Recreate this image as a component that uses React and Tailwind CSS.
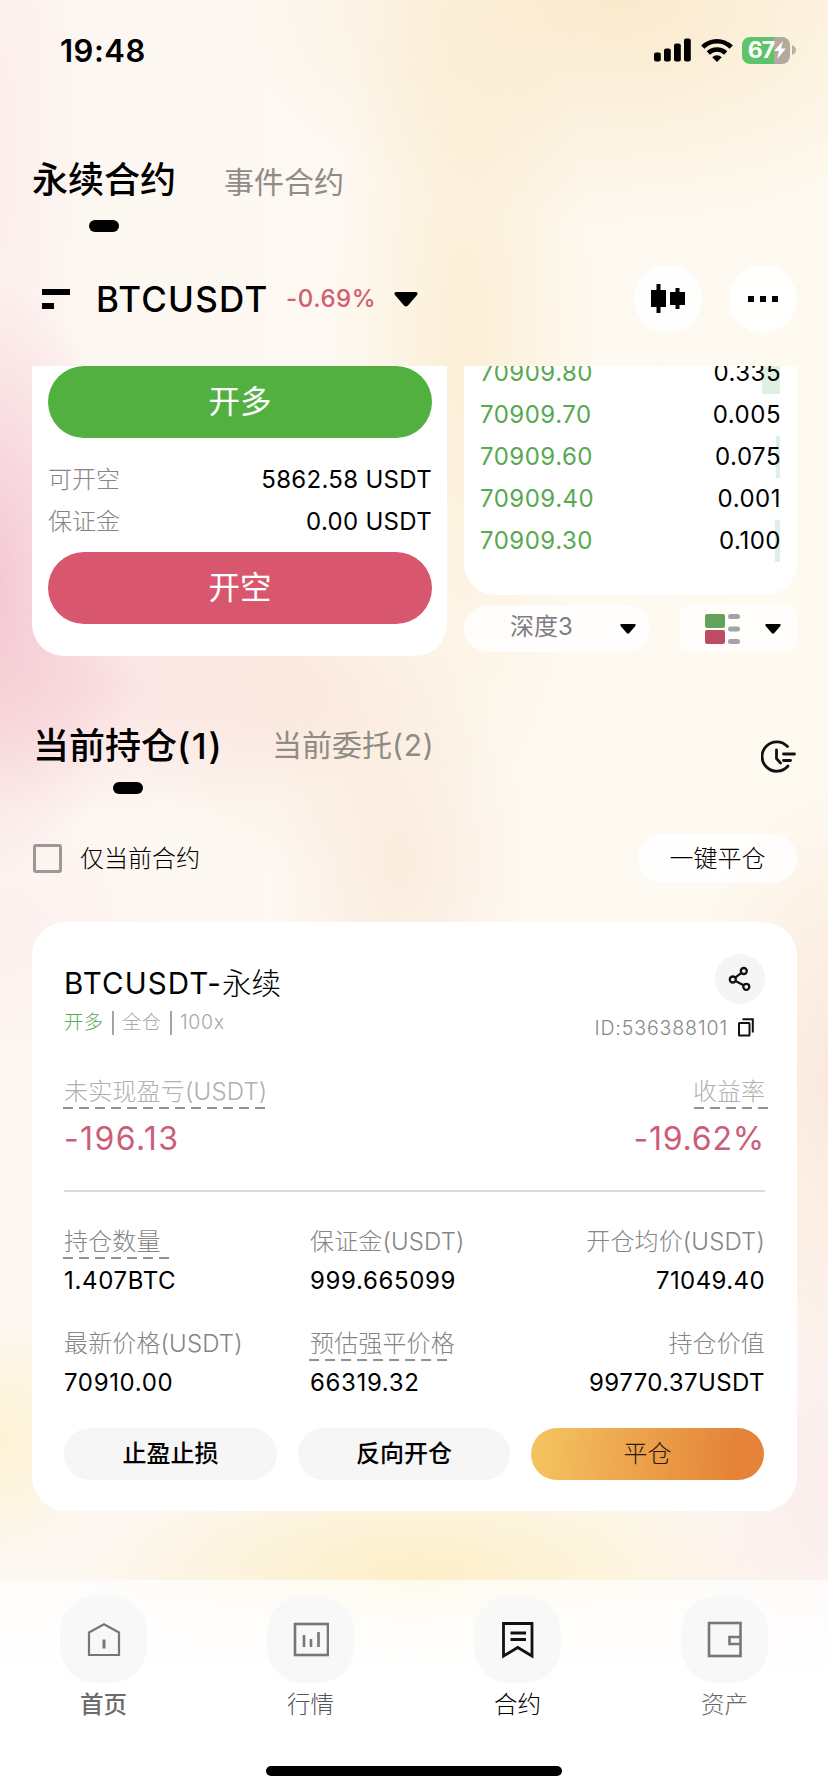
import React from "react";

const Caret = ({ className }) => (
  <svg viewBox="0 0 24 15" className={className} preserveAspectRatio="none">
    <path d="M2 0H22Q24.500 0.500 23 3L14 13.500Q12 15.500 10 13.500L1 3Q-0.500 0.500 2 0Z" fill="#000" />
  </svg>
);

const Dash = ({ className }) => (
  <div
    className={`absolute h-[2px] bg-[repeating-linear-gradient(90deg,#929292_0px,#929292_10px,transparent_10px,transparent_16px)] ${className}`}
  />
);

const StatusBar = () => (
  <div className="flex h-[100px] items-center justify-between pl-[60px] pr-[32px]">
    <span className="w-[90px] whitespace-nowrap text-[31px] font-semibold leading-none tracking-[0.500px]">19:48</span>
    <div className="flex items-center">
      <svg width="37" height="24" viewBox="0 0 37 24">
        <rect x="0" y="14.500" width="6.800" height="9" rx="2" />
        <rect x="10" y="10.500" width="6.800" height="13" rx="2" />
        <rect x="20" y="5.500" width="6.800" height="18" rx="2" />
        <rect x="30" y="0.500" width="6.800" height="23" rx="2" />
      </svg>
      <svg width="32" height="24" viewBox="0 0 32 24" className="ml-[10px]" fill="none" stroke="#000" strokeWidth="4.600">
        <path d="M1.800 9.200A20 20 0 0 1 30.200 9.200" />
        <path d="M7.300 15A12.500 12.500 0 0 1 24.700 15" />
        <path d="M11.200 19.200A7 7 0 0 1 20.800 19.200L16 24Z" fill="#000" stroke="none" />
      </svg>
      <div className="ml-[9px] flex h-[27px] w-[48px] items-center justify-center rounded-[8px] bg-[linear-gradient(90deg,#5fc36b_0_67%,#b3aa9d_67%)] pl-[2px] text-white">
        <span className="text-[23px] font-bold leading-none tracking-[-1px]">67</span>
        <svg width="12" height="18" viewBox="0 0 12 18">
          <path d="M9 0L0 10H5L3 18L12 7.500H7Z" fill="#fff" />
        </svg>
      </div>
      <svg width="4" height="10" viewBox="0 0 4 10" className="ml-[2px]">
        <path d="M0 0Q4 1.500 4 5T0 10Z" fill="#b9b2a4" />
      </svg>
    </div>
  </div>
);

const TopTabs = () => (
  <div className="h-[146px] pl-[32px]">
    <div className="flex h-[108px] items-end">
      <span className="h-[54px] w-[143px] whitespace-nowrap text-[36px] font-medium leading-[53px]">永续合约</span>
      <span className="ml-[49px] h-[50px] text-[30px] leading-[49px] text-[#8f8b87]">事件合约</span>
    </div>
    <div className="ml-[57px] mt-[12px] h-[12px] w-[30px] rounded-full bg-black" />
  </div>
);

const PairHeader = () => (
  <div className="flex h-[106px] items-center pl-[42px] pr-[31px]">
    <svg width="28" height="20" viewBox="0 0 28 20">
      <rect x="0" y="0" width="28" height="6" />
      <rect x="0" y="14" width="12" height="6" />
    </svg>
    <span className="ml-[26px] w-[174px] whitespace-nowrap text-[35px] font-medium leading-none tracking-[1.200px]">BTCUSDT</span>
    <span className="ml-[16px] w-[93px] whitespace-nowrap text-[24px] font-medium leading-none tracking-[0.600px] text-[#d0606f]">-0.69%</span>
    <Caret className="ml-[15px] h-[15px] w-[24px]" />
    <div className="ml-auto flex gap-[27px]">
      <div className="flex h-[68px] w-[68px] items-center justify-center rounded-full bg-white/90">
        <svg width="34" height="30" viewBox="0 0 34 30">
          <rect x="0" y="6" width="15" height="17" />
          <rect x="5.500" y="0" width="4" height="29" />
          <rect x="19" y="8" width="15" height="13" />
          <rect x="24.500" y="4" width="4" height="21" />
        </svg>
      </div>
      <div className="flex h-[68px] w-[68px] items-center justify-center gap-[6px] rounded-full bg-white/90">
        <i className="h-[6px] w-[6px] bg-black" />
        <i className="h-[6px] w-[6px] bg-black" />
        <i className="h-[6px] w-[6px] bg-black" />
      </div>
    </div>
  </div>
);

const InfoRow = ({ label, value }) => (
  <div className="flex h-[42px] items-center justify-between">
    <span className="text-[24px] font-light text-[#858585]">{label}</span>
    <span className="-mr-px text-[24px] tracking-[0.300px]">{value}</span>
  </div>
);

const orders = [
  ["70909.80", "0.335", "w-[18px]"],
  ["70909.70", "0.005", "w-0"],
  ["70909.60", "0.075", "w-[4px]"],
  ["70909.40", "0.001", "w-0"],
  ["70909.30", "0.100", "w-[5px]"],
];

const TradePanel = () => (
  <div className="flex h-[304px] overflow-hidden pl-[32px] pr-[31px] pt-[14px]">
    <div className="h-[290px] w-[415px] rounded-b-[32px] bg-white px-[16px]">
      <button className="block h-[72px] w-[384px] rounded-full bg-[#52b040] text-[31.500px] leading-[72px] text-white">开多</button>
      <div className="h-[114px] pt-[21px]">
        <InfoRow label="可开空" value="5862.58 USDT" />
        <InfoRow label="保证金" value="0.00 USDT" />
      </div>
      <button className="block h-[72px] w-[384px] rounded-full bg-[#d9576e] text-[31.500px] leading-[72px] text-white">开空</button>
    </div>
    <div className="ml-[17px] w-[333px]">
      <div className="flex h-[229px] flex-col justify-end overflow-hidden rounded-b-[32px] bg-white pb-[33px] pl-[16px] pr-[17px]">
        {orders.map(([price, amount, bar]) => (
          <div key={price} className="relative flex h-[42px] shrink-0 items-center justify-between text-[24px] tracking-[0.500px]">
            <div className={`absolute right-0 top-0 h-full bg-[#dff0e2] ${bar}`} />
            <span className="text-[#57a94f]">{price}</span>
            <span className="relative -mr-px">{amount}</span>
          </div>
        ))}
      </div>
      <div className="mt-[10px] flex h-[47px] justify-between">
        <div className="flex w-[186px] items-center rounded-full bg-white/80 pl-[46px]">
          <span className="w-[64px] whitespace-nowrap text-[24px] leading-[44px] text-[#7d7d82] -mt-[3px]">深度3</span>
          <Caret className="ml-[46px] h-[10px] w-[16px]" />
        </div>
        <div className="flex w-[117px] items-center rounded-[10px] bg-white/70 pl-[25px]">
          <svg width="36" height="30" viewBox="0 0 36 30">
            <rect width="20" height="14" rx="2" fill="#63a25b" />
            <rect y="16" width="20" height="14" rx="2" fill="#bd4d62" />
            <rect x="23" y="0" width="12" height="5" rx="2.500" fill="#a3a3a8" />
            <rect x="23" y="12.500" width="12" height="5" rx="2.500" fill="#a3a3a8" />
            <rect x="23" y="25" width="12" height="5" rx="2.500" fill="#a3a3a8" />
          </svg>
          <Caret className="ml-[24px] h-[10px] w-[16px]" />
        </div>
      </div>
    </div>
  </div>
);

const PositionTabs = () => (
  <div className="h-[266px] pl-[33px] pr-[31px]">
    <div className="flex h-[152px] pt-[62px]">
      <div className="w-[190px]">
        <div className="whitespace-nowrap text-[36px] font-medium leading-[56px]">
          当前持仓<span className="tracking-[1.500px]">(1)</span>
        </div>
        <div className="ml-[80px] mt-[8px] h-[12px] w-[30px] rounded-full bg-black" />
      </div>
      <span className="ml-[49px] text-[30px] leading-[55px] text-[#8f8b85]">
        当前委托<span className="tracking-[0.800px]">(2)</span>
      </span>
      <svg width="36" height="34" viewBox="0 0 36 34" className="ml-auto mt-[22px]" fill="none" stroke="#111" strokeWidth="2.800" strokeLinecap="round" strokeLinejoin="round">
        <path d="M26.500 6.500A14.700 14.700 0 1 0 27 26" />
        <path d="M15.500 10V18.500L19.500 23" />
        <path d="M22.500 14H33.500" />
        <path d="M22.500 20.500H29.500" />
      </svg>
    </div>
    <div className="mt-[12px] flex h-[77px] items-center">
      <div className="h-[29px] w-[29px] rounded-[3px] border-[3px] border-[#9c9898]" />
      <span className="ml-[18px] text-[24px] font-light">仅当前合约</span>
      <button className="ml-auto h-[49px] w-[159px] rounded-full bg-white/90 text-[24px] font-light leading-[49px]">一键平仓</button>
    </div>
  </div>
);

const Metric = ({ label, value, dash, right }) => (
  <div className={`h-[102px] whitespace-nowrap ${right ? "text-right" : ""}`}>
    <div className="relative h-[40px] text-[24px] font-light leading-[44px] tracking-[0.150px] text-[#858585]">
      {label}
      {dash && <Dash className={`-left-px top-[37px] ${dash}`} />}
    </div>
    <div className={`pt-px text-[24px] leading-[40px] ${right ? "tracking-[0.400px]" : "tracking-[0.650px]"}`}>{value}</div>
  </div>
);

const PositionCard = () => (
  <section className="mx-[32px] mr-[31px] h-[589px] rounded-[34px] bg-white px-[32px]">
    <div className="flex h-[148px] justify-between">
      <div className="pt-[38px]">
        <div className="whitespace-nowrap text-[29.500px] font-light leading-[46px]">
          <span className="font-normal tracking-[1.100px]">BTCUSDT-</span>永续
        </div>
        <div className="mt-[5px] flex h-[24px] items-center whitespace-nowrap text-[19.500px] font-light leading-none text-[#a8a8a8]">
          <span className="w-[39px] text-[#57a94f]">开多</span>
          <i className="ml-[9px] h-[24px] w-[2px] bg-[#a3a3a3]" />
          <span className="ml-[8px] w-[40px]">全仓</span>
          <i className="ml-[8px] h-[24px] w-[2px] bg-[#a3a3a3]" />
          <span className="ml-[8px] tracking-[0.700px]">100x</span>
        </div>
      </div>
      <div className="flex flex-col items-end pt-[32px]">
        <div className="flex h-[50px] w-[50px] items-center justify-center rounded-full bg-[#f5f5f5]">
          <svg width="24" height="26" viewBox="0 0 24 26" fill="none" stroke="#111" strokeWidth="2.300">
            <circle cx="15.800" cy="5" r="3" />
            <circle cx="4.800" cy="13.500" r="3" />
            <circle cx="18.300" cy="20.800" r="3" />
            <path d="M7.200 11.600L13.400 6.900M7.500 15L15.600 19.300" />
          </svg>
        </div>
        <div className="mr-[11px] mt-[15px] flex h-[20px] items-center">
          <span className="text-[19.500px] font-light leading-none tracking-[0.900px] text-[#888]">ID:536388101</span>
          <svg width="16" height="19" viewBox="0 0 16 19" className="ml-[10px] -mt-[3px]" fill="none" stroke="#111" strokeWidth="2">
            <rect x="1" y="5" width="10.500" height="12.500" rx="0.500" />
            <path d="M4.500 1.200H14.800V14.500" />
          </svg>
        </div>
      </div>
    </div>
    <div className="flex h-[122px] justify-between border-b-2 border-[#dadada]">
      <div className="relative whitespace-nowrap">
        <div className="h-[40px] text-[24px] font-light leading-[44px] tracking-[0.200px] text-[#b0b0b0]">未实现盈亏(USDT)</div>
        <Dash className="-left-px top-[37px] w-[203px]" />
        <div className="mt-[7px] text-[32px] leading-[44px] tracking-[1.400px] text-[#cc5c78]">-196.13</div>
      </div>
      <div className="whitespace-nowrap text-right">
        <div className="relative ml-auto h-[40px] w-[72px] text-[24px] font-light leading-[44px] text-[#b0b0b0]">
          收益率
          <Dash className="left-px top-[37px] w-[74px]" />
        </div>
        <div className="mt-[7px] text-[32px] leading-[44px] tracking-[0.800px] text-[#cc5c78]">-19.62%</div>
      </div>
    </div>
    <div className="grid grid-cols-[246px_210px_1fr] pt-[28px]">
      <Metric label="持仓数量" value="1.407BTC" dash="w-[107px]" />
      <Metric label="保证金(USDT)" value="999.665099" />
      <Metric label="开仓均价(USDT)" value="71049.40" right />
      <Metric label="最新价格(USDT)" value="70910.00" />
      <Metric label="预估强平价格" value="66319.32" dash="w-[139px]" />
      <Metric label="持仓价值" value="99770.37USDT" right />
    </div>
    <div className="mt-[4px] flex h-[52px] gap-[21px] text-[24px] leading-[52px]">
      <button className="w-[213px] rounded-full bg-[#f6f6f6] font-medium">止盈止损</button>
      <button className="w-[212px] rounded-full bg-[#f6f6f6] font-medium">反向开仓</button>
      <button className="w-[233px] rounded-full bg-[linear-gradient(100deg,#f5c662,#e58439_85%)] font-light text-[#2a1808]">平仓</button>
    </div>
  </section>
);

const NavItem = ({ label, className, children }) => (
  <div className="flex w-[207px] flex-col items-center">
    <div className="flex h-[87px] w-[87px] items-center justify-center rounded-[36px] bg-[#f8f8f8]">{children}</div>
    <span className={`mt-[4px] text-[23.500px] leading-[36px] ${className}`}>{label}</span>
  </div>
);

const BottomNav = () => (
  <nav className="h-[212px] bg-[linear-gradient(180deg,rgba(255,255,255,0.7),#fff_50%)] pt-[16px]">
    <div className="flex h-[170px]">
      <NavItem label="首页" className="font-medium text-[#6b6b6b]">
        <svg width="34" height="36" viewBox="0 0 34 36" fill="none" stroke="#777" strokeWidth="2.200">
          <path d="M2 10.500L17 2.200L32 10.500V33H2Z" />
          <path d="M17 17.500V26.500" strokeWidth="3" />
        </svg>
      </NavItem>
      <NavItem label="行情" className="font-light text-[#555]">
        <svg width="36" height="36" viewBox="0 0 36 36" fill="none" stroke="#777" strokeWidth="2.600">
          <rect x="2" y="2" width="33" height="31" />
          <path d="M11 13V25M18 17V25M25.500 10V25" />
        </svg>
      </NavItem>
      <NavItem label="合约" className="font-light text-black">
        <svg width="34" height="38" viewBox="0 0 34 38" fill="none" stroke="#111" strokeWidth="2.800">
          <path d="M2.500 2.500H31V35L16.750 26.500L2.500 35Z" />
          <path d="M9.500 12H25M9.500 18.500H25" />
        </svg>
      </NavItem>
      <NavItem label="资产" className="font-light text-[#666]">
        <svg width="36" height="38" viewBox="0 0 36 38" fill="none" stroke="#777" strokeWidth="2.600">
          <rect x="2" y="2" width="31.500" height="33" />
          <path d="M33 16H22.500V23H33" />
        </svg>
      </NavItem>
    </div>
    <div className="mx-auto h-[10px] w-[296px] rounded-full bg-black" />
  </nav>
);

export default function App() {
  return (
    <main className="h-[1792px] w-[828px] overflow-hidden bg-[radial-gradient(ellipse_170px_300px_at_-20px_580px,rgba(242,184,200,0.8),transparent),radial-gradient(ellipse_330px_130px_at_100px_690px,rgba(248,208,212,0.5),transparent),radial-gradient(ellipse_130px_220px_at_400px_860px,rgba(249,224,206,0.55),transparent),radial-gradient(ellipse_170px_180px_at_300px_690px,rgba(249,226,206,0.5),transparent),radial-gradient(ellipse_380px_230px_at_620px_0px,rgba(249,228,192,0.75),transparent),radial-gradient(ellipse_130px_480px_at_465px_330px,rgba(251,236,206,0.8),transparent),radial-gradient(ellipse_90px_500px_at_0px_150px,rgba(252,228,232,0.5),transparent),radial-gradient(ellipse_180px_300px_at_850px_1080px,rgba(249,222,210,0.7),transparent),radial-gradient(ellipse_240px_300px_at_860px_1480px,rgba(249,230,235,0.7),transparent),radial-gradient(ellipse_340px_110px_at_420px_1570px,rgba(252,234,180,0.7),transparent),radial-gradient(ellipse_120px_130px_at_0px_1440px,rgba(255,242,204,0.8),transparent),radial-gradient(ellipse_180px_160px_at_0px_930px,rgba(253,236,236,0.6),transparent),linear-gradient(90deg,#fdf7f2,#fefaf0)] font-['Inter','Noto_Sans_CJK_SC',sans-serif] text-black">
      <StatusBar />
      <TopTabs />
      <PairHeader />
      <TradePanel />
      <PositionTabs />
      <PositionCard />
      <div className="h-[69px]" />
      <BottomNav />
    </main>
  );
}
